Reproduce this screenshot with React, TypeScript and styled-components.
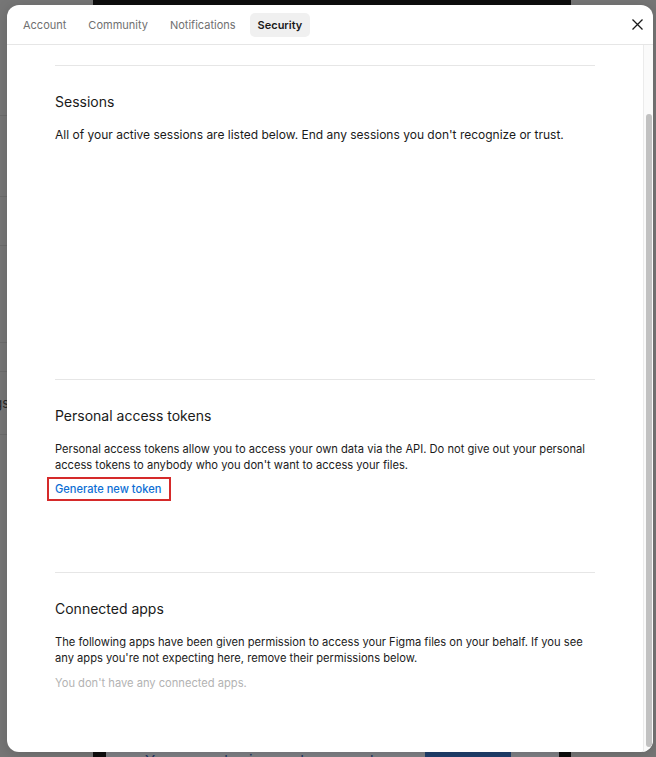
import React from "react";
import styled, { createGlobalStyle } from "styled-components";

const Global = createGlobalStyle`
  html, body { margin: 0; padding: 0; }
  body {
    font-family: Inter, "Noto Sans", "Liberation Sans", sans-serif;
    -webkit-font-smoothing: antialiased;
    background: #777777;
  }
`;

const Page = styled.div`
  position: relative;
  width: 656px;
  height: 757px;
  overflow: hidden;
  display: grid;
  grid-template-columns: 93px 478px 1fr;
  background: #777777;
`;

const SideColumn = styled.div`
  display: flex;
  flex-direction: column;
  background: #767676;
`;

const SideRow = styled.div<{ $h: number }>`
  height: ${(p) => p.$h}px;
  flex: none;
  border-bottom: 1px solid #6c6c6c;
  display: flex;
  align-items: center;
  justify-content: flex-end;
  padding-right: 84px;
  font-size: 13px;
  color: #262626;
  white-space: nowrap;
`;

const CenterColumn = styled.div`
  background: #0e0e0e;
  display: flex;
  flex-direction: column;
  justify-content: flex-end;
  padding: 0 12px 0 13px;
`;

const Banner = styled.div`
  height: 40px;
  margin-bottom: -33px;
  background: #7f8185;
  display: flex;
  align-items: center;
  gap: 8px;
  padding: 0 20px 0 16px;
  font-size: 15px;
  color: #1d3560;
`;

const BannerButton = styled.span`
  margin-left: auto;
  margin-right: 10px;
  background: #1f3f6c;
  color: #8696b0;
  padding: 5px 14px;
  font-size: 13px;
`;

const Modal = styled.div`
  position: absolute;
  left: 7px;
  top: 5px;
  width: 646px;
  height: 747px;
  background: #ffffff;
  border-radius: 12px;
  overflow: hidden;
  display: flex;
  flex-direction: column;
  box-shadow: 0 2px 14px rgba(0, 0, 0, 0.15);
`;

const Header = styled.div`
  height: 39px;
  flex: none;
  display: flex;
  align-items: center;
  padding: 0 4px 0 8px;
  border-bottom: 1px solid #e6e6e6;
`;

const Tabs = styled.div`
  display: flex;
  gap: 6px;
`;

const Tab = styled.button<{ $active?: boolean }>`
  height: 24px;
  padding: 0 8px;
  border: none;
  border-radius: 5px;
  font-family: inherit;
  font-size: 11px;
  font-weight: ${(p) => (p.$active ? 600 : 400)};
  color: ${(p) => (p.$active ? "#1a1a1a" : "#707070")};
  background: ${(p) => (p.$active ? "#f0f0f0" : "transparent")};
  cursor: pointer;
`;

const CloseButton = styled.button`
  margin-left: auto;
  width: 24px;
  height: 24px;
  border: none;
  background: transparent;
  display: flex;
  align-items: center;
  justify-content: center;
  padding: 0;
  color: #1a1a1a;
`;

const Body = styled.div`
  flex: 1;
  min-height: 0;
  display: flex;
`;

const Viewport = styled.div`
  flex: 1;
  overflow: hidden;
  padding: 20px 48px 0 48px;
`;

const ScrollTrack = styled.div`
  width: 9px;
  flex: none;
  background: #fafafa;
  border-left: 1px solid #ebebeb;
  display: flex;
  flex-direction: column;
`;

const ScrollThumb = styled.div<{ $top: number; $h: number }>`
  margin: ${(p) => p.$top}px 1px 0 2px;
  height: ${(p) => p.$h}px;
  border-radius: 3px;
  background: #c1c1c1;
`;

const Section = styled.section`
  border-top: 1px solid #e6e6e6;
  padding-top: 27px;
`;

const Heading = styled.h2`
  margin: 0 0 16px;
  font-size: 14px;
  line-height: 18px;
  font-weight: 400;
  color: #1a1a1a;
`;

const Text = styled.p<{ $muted?: boolean; $size?: number }>`
  margin: 0;
  font-size: ${(p) => p.$size ?? 11.15}px;
  line-height: 16px;
  color: ${(p) => (p.$muted ? "#b3b3b3" : "#1a1a1a")};
`;

const Spacer = styled.div<{ $h: number }>`
  height: ${(p) => p.$h}px;
`;

const HighlightBox = styled.div`
  display: inline-block;
  margin: 4px 0 0 -8px;
  padding: 2px 8px 2px 6px;
  border: 2px solid #d52a2a;
`;

const LinkButton = styled.button`
  border: none;
  background: none;
  padding: 0;
  font-family: inherit;
  font-size: 11.1px;
  line-height: 16px;
  font-weight: 500;
  color: #0d6ed4;
  cursor: pointer;
  display: block;
`;

export default function App() {
  return (
    <>
      <Global />
      <Page>
        <SideColumn>
          <SideRow $h={115} />
          <SideRow $h={80} />
          <SideRow $h={48} />
          <SideRow $h={96} />
          <SideRow $h={28} />
          <SideRow $h={62}>Settings</SideRow>
        </SideColumn>
        <CenterColumn>
          <Banner>
            <span>ⓘ</span>
            <span>You can only view and comment on this file</span>
            <BannerButton>Ask to edit</BannerButton>
            <span>×</span>
          </Banner>
        </CenterColumn>
        <SideColumn />

        <Modal>
          <Header>
            <Tabs>
              <Tab>Account</Tab>
              <Tab>Community</Tab>
              <Tab>Notifications</Tab>
              <Tab $active>Security</Tab>
            </Tabs>
            <CloseButton aria-label="Close">
              <svg width="11" height="11" viewBox="0 0 11 11" fill="none">
                <path d="M0.5 0.5L10.5 10.5M10.5 0.5L0.5 10.5" stroke="currentColor" strokeWidth="1.3" />
              </svg>
            </CloseButton>
          </Header>
          <Body>
            <Viewport>
              <Section>
                <Heading>Sessions</Heading>
                <Text $size={12}>
                  All of your active sessions are listed below. End any sessions you don't recognize or trust.
                </Text>
                <Spacer $h={236} />
              </Section>
              <Section>
                <Heading>Personal access tokens</Heading>
                <Text>
                  Personal access tokens allow you to access your own data via the API. Do not give out your personal
                  access tokens to anybody who you don't want to access your files.
                </Text>
                <HighlightBox>
                  <LinkButton>Generate new token</LinkButton>
                </HighlightBox>
                <Spacer $h={71} />
              </Section>
              <Section>
                <Heading>Connected apps</Heading>
                <Text>
                  The following apps have been given permission to access your Figma files on your behalf. If you see
                  any apps you're not expecting here, remove their permissions below.
                </Text>
                <Spacer $h={9} />
                <Text $muted>You don't have any connected apps.</Text>
              </Section>
            </Viewport>
            <ScrollTrack>
              <ScrollThumb $top={69} $h={633} />
            </ScrollTrack>
          </Body>
        </Modal>
      </Page>
    </>
  );
}
